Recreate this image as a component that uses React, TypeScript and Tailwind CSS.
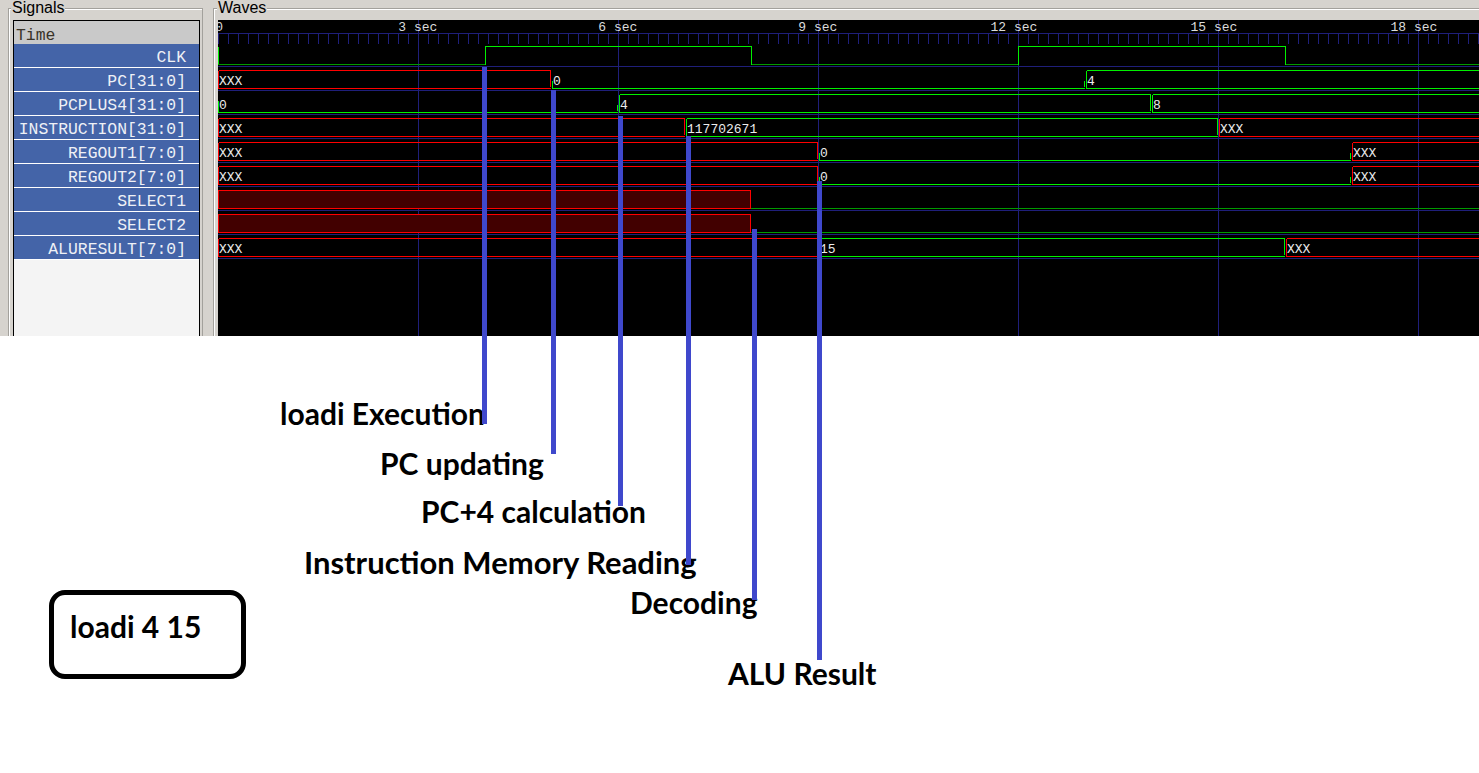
import React from "react";

// px per second on the wave canvas
const PX = 200 / 3;
const W = 1261;
const H = 316;
const RED = "#ff0000";
const GREEN = "#00f000";
const LOW = "#009a00";
const GRID = "#1f1f7a";

const signals = [
  "CLK",
  "PC[31:0]",
  "PCPLUS4[31:0]",
  "INSTRUCTION[31:0]",
  "REGOUT1[7:0]",
  "REGOUT2[7:0]",
  "SELECT1",
  "SELECT2",
  "ALURESULT[7:0]",
];

type Seg = { t: number; v: string };

const buses: { row: number; segs: Seg[] }[] = [
  { row: 1, segs: [{ t: 0, v: "xxx" }, { t: 5, v: "0" }, { t: 13, v: "4" }] },
  { row: 2, segs: [{ t: 0, v: "0" }, { t: 6, v: "4" }, { t: 14, v: "8" }] },
  { row: 3, segs: [{ t: 0, v: "xxx" }, { t: 7, v: "117702671" }, { t: 15, v: "xxx" }] },
  { row: 4, segs: [{ t: 0, v: "xxx" }, { t: 9, v: "0" }, { t: 17, v: "xxx" }] },
  { row: 5, segs: [{ t: 0, v: "xxx" }, { t: 9, v: "0" }, { t: 17, v: "xxx" }] },
  { row: 8, segs: [{ t: 0, v: "xxx" }, { t: 9, v: "15" }, { t: 16, v: "xxx" }] },
];

const rowTop = (row: number) => 26 + 24 * row + 0.5;
const rowBot = (row: number) => 44 + 24 * row + 0.5;

function Bus({ row, segs }: { row: number; segs: Seg[] }) {
  const yT = rowTop(row);
  const yB = rowBot(row);
  return (
    <g>
      {segs.map((s, i) => {
        const last = i === segs.length - 1;
        const x0 = Math.round(s.t * PX);
        const x1 = last ? W : Math.round(segs[i + 1].t * PX);
        const c = s.v === "xxx" ? RED : GREEN;
        const zero = s.v === "0";
        const xl = x0 + 0.5 + (i ? 1 : 0);
        const xr = x1 - 0.5;
        const yS = zero ? yB - (i ? 8 : 12) : yT;
        let d = `M${xl} ${yS}V${yB}H${xr}`;
        if (!zero) d += ` M${xl} ${yT}H${xr}`;
        if (!last) d += ` M${xr} ${zero ? yB - 8 : yT}V${yB - 2}`;
        return (
          <g key={i}>
            <path d={d} stroke={c} fill="none" />
            <text
              x={xl + 0.5}
              y={yB - 3.5}
              fill="#ececec"
              fontSize={13}
              fontFamily="'Liberation Mono', monospace"
              shapeRendering="auto"
            >
              {s.v === "xxx" ? "XXX" : s.v}
            </text>
          </g>
        );
      })}
    </g>
  );
}

function Bit({ row, xUntil }: { row: number; xUntil: number }) {
  const yT = rowTop(row);
  const yB = rowBot(row);
  const x = Math.round(xUntil * PX);
  return (
    <g>
      <rect x={0.5} y={yT} width={x - 1} height={yB - yT} fill="#420000" stroke={RED} />
      <path d={`M${x} ${yB}H${W}`} stroke={LOW} />
    </g>
  );
}

function Clock() {
  const yT = rowTop(0);
  const yB = rowBot(0);
  const e = [0, 4, 8, 12, 16].map((t) => Math.round(t * PX) + 0.5);
  return (
    <g>
      <path d={`M${e[0]} ${yT}V${yB}`} stroke={GREEN} />
      <path d={`M0 ${yB}H${e[1]} M${e[2]} ${yB}H${e[3]} M${e[4]} ${yB}H${W}`} stroke={LOW} />
      <path
        d={`M${e[1]} ${yB}V${yT}H${e[2]}V${yB} M${e[3]} ${yB}V${yT}H${e[4]}V${yB}`}
        stroke={GREEN}
        fill="none"
      />
    </g>
  );
}

function WaveCanvas() {
  const ticks = Array.from({ length: 127 }, (_, k) => k * 10 + 0.5);
  const grid = [1, 2, 3, 4, 5, 6];
  return (
    <svg width={W} height={H} className="block" shapeRendering="crispEdges">
      <rect width={W} height={H} fill="#000" />
      {grid.map((k) => (
        <path key={k} d={`M${k * 200 + 0.5} 0V${H}`} stroke={GRID} />
      ))}
      <path d={`M0 13.5H${W}`} stroke={GRID} />
      {ticks.map((x) => (
        <path key={x} d={`M${x} 13V23.5`} stroke={GRID} />
      ))}
      {Array.from({ length: 9 }, (_, n) => (
        <path key={n} d={`M0 ${46.5 + 24 * n}H${W}`} stroke={GRID} />
      ))}
      <g fill="#dcdcdc" fontSize={13} fontFamily="'Liberation Mono', monospace" shapeRendering="auto">
        <text x={5} y={11} textAnchor="end">0</text>
        {grid.map((k) => (
          <g key={k}>
            <text x={k * 200 - 12} y={11} textAnchor="end">{k * 3}</text>
            <text x={k * 200 - 4} y={11}>sec</text>
          </g>
        ))}
      </g>
      <Clock />
      {buses.map((b) => (
        <Bus key={b.row} row={b.row} segs={b.segs} />
      ))}
      <Bit row={6} xUntil={8} />
      <Bit row={7} xUntil={8} />
    </svg>
  );
}

export default function App() {
  return (
    <div className="relative w-[1479px] h-[773px] overflow-hidden bg-white font-['Liberation_Sans',sans-serif]">
      {/* Viewer panes */}
      <div className="flex h-[336px] overflow-hidden bg-[#d6d3ce]">
        {/* Signals */}
        <div className="w-[213px] shrink-0 pl-[8px] pr-[10px] pt-[8px]">
          <div className="relative h-[340px] border border-[#a3a19c] shadow-[inset_1px_1px_0_#fff] pl-[4px] pr-[2px] pt-[11px]">
            <span className="absolute left-[2px] top-[-9px] bg-[#d6d3ce] px-[1px] text-[16px] leading-[16px] text-black">
              Signals
            </span>
            <div className="h-full border border-black bg-[#f4f4f4] font-['Liberation_Mono',monospace] text-[16.4px]">
              <div className="h-[23px] overflow-hidden bg-[#c9c9c9] pl-[2px] leading-[30px] text-[#3a3328]">Time</div>
              {signals.map((s) => (
                <div
                  key={s}
                  className="h-[24px] overflow-hidden border-b border-white bg-[#4464a8] pr-[13px] text-right leading-[27px] text-[#eef0f6]"
                >
                  {s}
                </div>
              ))}
            </div>
          </div>
        </div>

        {/* Waves */}
        <div className="flex-1">
          <div className="relative mt-[8px] h-[340px] border border-r-0 border-[#a3a19c] shadow-[inset_1px_1px_0_#fff] pl-[4px] pt-[11px]">
            <span className="absolute left-[3px] top-[-9px] bg-[#d6d3ce] px-[1px] text-[16px] leading-[16px] text-black">
              Waves
            </span>
            <WaveCanvas />
          </div>
        </div>
      </div>

      {/* Annotations */}
      <div className="font-['Lato',sans-serif] text-[30px] font-bold leading-none text-black">
        <span className="absolute left-[280px] top-[398px]">loadi Execution</span>
        <span className="absolute left-[380px] top-[448px]">PC updating</span>
        <span className="absolute left-[421px] top-[496px]">PC+4 calculation</span>
        <span className="absolute left-[304px] top-[547px] text-[31px]">Instruction Memory Reading</span>
        <span className="absolute left-[630px] top-[587px]">Decoding</span>
        <span className="absolute left-[728px] top-[658px]">ALU Result</span>
        <div className="absolute left-[49px] top-[590px] h-[89px] w-[197px] rounded-[16px] border-[5px] border-black pl-[16px] pt-[16px]">
          loadi 4 15
        </div>
      </div>

      {/* Marker lines */}
      <svg className="pointer-events-none absolute left-0 top-0" width={1479} height={773}>
        <g fill="#3f48cc">
          <rect x={482} y={67} width={5} height={357} />
          <rect x={551} y={90} width={5} height={364} />
          <rect x={618} y={116} width={5} height={390} />
          <rect x={686} y={136} width={5} height={429} />
          <rect x={752} y={229} width={5} height={371} />
          <rect x={817} y={181} width={5} height={479} />
        </g>
      </svg>
    </div>
  );
}
